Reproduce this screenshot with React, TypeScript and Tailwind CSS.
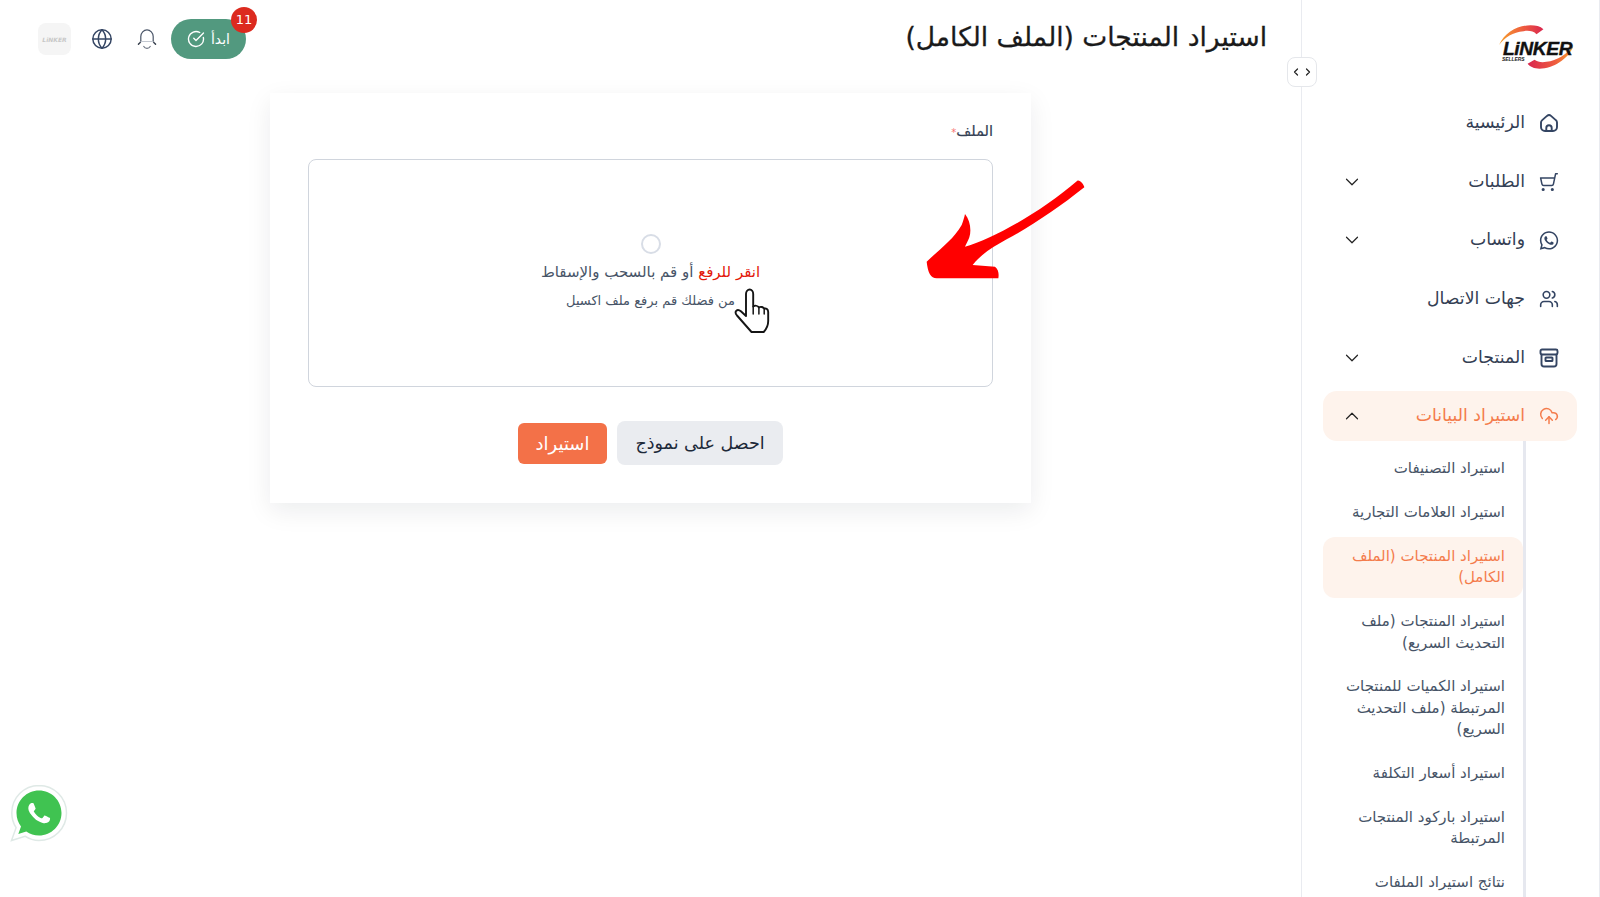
import React from "react";
import { ShoppingCart, Users, CloudUpload, ChevronDown, ChevronUp, Globe, CircleCheckBig, ChevronLeft, ChevronRight } from "lucide-react";
import { FaWhatsapp } from "react-icons/fa";

const PHONE = "M17.472 14.382c-.297-.149-1.758-.867-2.03-.967-.273-.099-.471-.148-.67.15-.197.297-.767.966-.94 1.164-.173.199-.347.223-.644.075-.297-.15-1.255-.463-2.39-1.475-.883-.788-1.48-1.761-1.653-2.059-.173-.297-.018-.458.13-.606.134-.133.298-.347.446-.52.149-.174.198-.298.298-.497.099-.198.05-.371-.025-.52-.075-.149-.669-1.612-.916-2.207-.242-.579-.487-.5-.669-.51-.173-.008-.371-.01-.57-.01-.198 0-.52.074-.792.372-.272.297-1.04 1.016-1.04 2.479 0 1.462 1.065 2.875 1.213 3.074.149.198 2.096 3.2 5.077 4.487.709.306 1.262.489 1.694.625.712.227 1.36.195 1.871.118.571-.085 1.758-.719 2.006-1.413.248-.694.248-1.289.173-1.413-.074-.124-.272-.198-.57-.347";

function HomeIcon() {
  return (
    <svg width="20" height="20" viewBox="0 0 20 20" fill="none" stroke="#344563" strokeWidth="1.9" strokeLinejoin="round" strokeLinecap="round">
      <path d="M2 9.6c0-1 .5-1.9 1.2-2.5L8 2.9c1.2-1 2.9-1 4 0l4.800 4.200c.8.6 1.200 1.500 1.200 2.500V14c0 2.200-1.800 4-4 4H6c-2.200 0-4-1.800-4-4V9.600z" />
      <path d="M7.300 18v-3c0-1.500 1.200-2.700 2.700-2.700s2.700 1.200 2.700 2.700V18" />
    </svg>
  );
}

function ArchiveIcon() {
  return (
    <svg width="20" height="20" viewBox="0 0 20 20" fill="none" stroke="#344563" strokeWidth="1.9" strokeLinejoin="round" strokeLinecap="round">
      <rect x="1.500" y="1.500" width="17" height="5" rx="1.500" />
      <path d="M2.500 6.500V16c0 1.400 1.100 2.500 2.500 2.500h10c1.400 0 2.500-1.100 2.500-2.500V6.500" />
      <rect x="6.500" y="9.500" width="7" height="3.500" rx=".6" />
    </svg>
  );
}

function BellIcon() {
  return (
    <svg width="20" height="22" viewBox="0 0 20 22" fill="none" strokeLinecap="round" strokeLinejoin="round">
      <path d="M3.800 13.500V8.500C3.800 5 6.700 1.800 10 1.800s6.200 3.200 6.200 6.700v5" stroke="#4a5568" strokeWidth="1.200" />
      <path d="M3.800 13.500c-.5 1-1.400 2-2.300 2.700M16.200 13.500c.5 1 1.400 2 2.300 2.700" stroke="#38404e" strokeWidth="1.500" />
      <path d="M3.800 13.500h12.400" stroke="#c3c8d1" strokeWidth="1" />
      <path d="M6.800 18.500c.7 1.200 1.900 1.800 3.200 1.800s2.500-.6 3.200-1.800" stroke="#6b7280" strokeWidth="1.200" />
    </svg>
  );
}

function Logo() {
  return (
    <svg width="77" height="48" viewBox="0 0 78 48" direction="ltr">
      <defs>
        <linearGradient id="arcTop" x1="0" y1="0" x2="1" y2="0">
          <stop offset="0" stopColor="#f6a12b" />
          <stop offset="0.55" stopColor="#ee5b3f" />
          <stop offset="1" stopColor="#d9264f" />
        </linearGradient>
        <linearGradient id="arcBottom" x1="0" y1="0" x2="1" y2="0">
          <stop offset="0" stopColor="#d9264f" />
          <stop offset="0.6" stopColor="#ee5b3f" />
          <stop offset="1" stopColor="#f6a12b" />
        </linearGradient>
      </defs>
      <path d="M1 21C7 8 20 1 33 1c5 0 10 1 13 4l-7 5c-3-3-8-4-13-3C15 8 7 13 1 21z" fill="url(#arcTop)" />
      <path d="M76 23C71 35 56 45 42 45c-5 0-10-2-12-5l7-4c3 2 7 3 12 2 11-1 20-8 27-15z" fill="url(#arcBottom)" />
      <text x="5" y="31" textAnchor="start" fontFamily="'Liberation Sans', sans-serif" fontWeight="700" fontStyle="italic" fontSize="19.500" letterSpacing="-0.400" fill="#111" stroke="#111" strokeWidth="0.400">LiNKER</text>
      <text x="4" y="37.500" textAnchor="start" fontFamily="'Liberation Sans', sans-serif" fontWeight="700" fontStyle="italic" fontSize="5" fill="#222">SELLERS</text>
    </svg>
  );
}

function WhatsAppBadge() {
  return (
    <svg width="58" height="58" viewBox="0 0 58 58" className="absolute left-[10px] top-[784px]">
      <path d="M29 1.500C13.800 1.500 1.800 13.800 1.800 29c0 5.400 1.600 10.500 4.300 14.700L1.500 56.500l13.500-4.300C19.100 54.900 24 56.500 29 56.500c15.200 0 27.500-12.300 27.500-27.500S44.200 1.500 29 1.500z" fill="#ffffff" stroke="#dfe9e6" strokeWidth="1.500" />
      <path d="M29 6.500C16.600 6.500 6.500 16.600 6.500 29c0 5 1.700 9.600 4.500 13.400L8.300 50l8-2.600c3.700 2.500 8 4 12.700 4 12.400 0 22.500-10.100 22.500-22.500S41.400 6.500 29 6.500z" fill="#40c351" />
      <g transform="translate(7.500 7.500) scale(1.800)"><path d={PHONE} fill="#fff" /></g>
    </svg>
  );
}

const NAV = [
  { label: "الرئيسية", icon: <HomeIcon /> },
  { label: "الطلبات", icon: <ShoppingCart size={22} strokeWidth={1.8} color="#344563" className="-scale-x-100" />, chev: true },
  { label: "واتساب", icon: <FaWhatsapp size={21} color="#344563" />, chev: true },
  { label: "جهات الاتصال", icon: <Users size={20} strokeWidth={1.9} color="#344563" /> },
  { label: "المنتجات", icon: <ArchiveIcon />, chev: true },
];

const SUB = [
  "استيراد التصنيفات",
  "استيراد العلامات التجارية",
  "استيراد المنتجات (الملف الكامل)",
  "استيراد المنتجات (ملف التحديث السريع)",
  "استيراد الكميات للمنتجات المرتبطة (ملف التحديث السريع)",
  "استيراد أسعار التكلفة",
  "استيراد باركود المنتجات المرتبطة",
  "نتائج استيراد الملفات",
];

export default function App() {
  return (
    <div dir="rtl" className="relative flex h-[897px] w-[1600px] overflow-hidden bg-white font-['DejaVu_Sans','Noto_Sans',sans-serif] text-[#344054]">
      <aside className="flex h-full w-[299px] shrink-0 flex-col overflow-hidden border-x border-[#e9ebf0] pl-[21px] pr-[22px]">
        <div className="mr-[2px] flex h-[98px] shrink-0 items-start justify-start pt-[24px]">
          <Logo />
        </div>
        <nav className="flex flex-col gap-[8.700px]">
          {NAV.map((n, i) => (
            <a key={i} className="flex h-[50px] items-center gap-[14px] pl-[18px] pr-[18px] text-[17.300px]">
              <span className="flex w-[20px] justify-center">{n.icon}</span>
              <span>{n.label}</span>
              {n.chev && <ChevronDown size={22} strokeWidth={1.300} color="#222" className="mr-auto" />}
            </a>
          ))}
          <a className="flex h-[50px] items-center gap-[14px] rounded-[14px] bg-[#fef3ec] pl-[18px] pr-[18px] text-[17.300px] text-[#f47c4c]">
            <span className="flex w-[20px] justify-center"><CloudUpload size={22} strokeWidth={1.800} color="#f47c4c" /></span>
            <span>استيراد البيانات</span>
            <ChevronUp size={22} strokeWidth={1.300} color="#222" className="mr-auto" />
          </a>
        </nav>
        <div className="mr-[51px] flex flex-col gap-[4.200px] border-r-[3px] border-[#e6e8ef] pt-[8px]">
          {SUB.map((s, i) => (
            <a key={i} className={`block rounded-[12px] py-[9px] pl-[10px] pr-[18px] text-[15px] leading-[21.500px] ${i === 2 ? "bg-[#fef3ec] text-[#f47c4c]" : "text-[#475467]"}`}>
              {s}
            </a>
          ))}
        </div>
      </aside>

      <button className="absolute left-[1287px] top-[57px] flex h-[30px] w-[30px] items-center justify-center rounded-[8px] border border-[#e5e7eb] bg-white">
        <ChevronRight size={12} strokeWidth={2.400} color="#222" />
        <ChevronLeft size={12} strokeWidth={2.400} color="#222" />
      </button>

      <main className="flex min-w-0 flex-1 flex-col">
        <header className="flex h-[93px] shrink-0 items-start justify-between pl-[38px] pr-[34px]">
          <h1 className="pt-[17px] text-[26.500px] leading-[40px] text-[#1a1a1a] [-webkit-text-stroke:0.3px_#1a1a1a]">استيراد المنتجات (الملف الكامل)</h1>
          <div className="flex items-center pt-[19px]">
            <button className="relative ml-[14px] flex h-[40px] w-[75px] items-center justify-center gap-[6px] rounded-full bg-[#52997f] text-[14px] text-white">
              <span>ابدأ</span>
              <CircleCheckBig size={18} strokeWidth={1.800} color="#fff" />
              <span className="absolute left-[60px] top-[-12px] flex h-[26px] w-[26px] items-center justify-center rounded-full bg-[#dc2a1f] text-[13px] text-white">11</span>
            </button>
            <span className="ml-[24px] flex"><BellIcon /></span>
            <span className="ml-[20px] flex"><Globe size={22} strokeWidth={1.600} color="#344563" /></span>
            <div dir="ltr" className="flex h-[32px] w-[33px] items-center justify-center rounded-[8px] bg-[#f5f5f5] text-[6px] font-bold italic text-[#c8c8c8]">LiNKER</div>
          </div>
        </header>

        <section className="mx-auto flex h-[410px] w-[761px] shrink-0 flex-col bg-white px-[38px] pt-[26px] shadow-[0_8px_24px_rgba(16,24,40,0.08)]">
          <label className="h-[40px] text-[14.500px] leading-[24px] text-[#344054] [-webkit-text-stroke:0.2px_#344054]">
            الملف<span className="text-[10px] text-[#f87171] [-webkit-text-stroke:0]">*</span>
          </label>
          <div className="flex h-[228px] flex-col items-center justify-center rounded-[8px] border border-[#d0d5dd] pb-[2px]">
            <span className="h-[20px] w-[20px] rounded-full border-2 border-[#d8dde6]" />
            <p className="mt-[8px] text-[15px] leading-[20px] text-[#475467]">
              <span className="text-[#e3170a]">انقر للرفع</span> أو قم بالسحب والإسقاط
            </p>
            <p className="mt-[9px] text-[13px] leading-[20px] text-[#475467]">من فضلك قم برفع ملف اكسيل</p>
          </div>
          <div className="mt-[34px] flex items-center justify-center gap-[10px]">
            <button className="flex h-[44px] w-[166px] items-center justify-center rounded-[8px] bg-[#eaecf0] text-[17.500px] text-[#1d2939]">احصل على نموذج</button>
            <button className="flex h-[41px] w-[89px] items-center justify-center rounded-[6px] bg-[#f37148] text-[18px] font-medium text-white">استيراد</button>
          </div>
        </section>
      </main>

      <svg width="220" height="190" viewBox="0 0 660 570" className="pointer-events-none absolute left-[900px] top-[110px]">
        <path d="M532 212C540 209 552 224 553 232C480 290 400 345 320 388C285 408 250 425 218 465L285 470C296 478 297 492 295 505L110 505C92 503 84 490 80 455C110 425 160 390 185 345C190 332 193 322 195 312C210 330 215 360 208 382C204 394 198 403 195 410C285 385 430 300 532 212Z" fill="#ff0000" />
      </svg>

      <svg width="36" height="46" viewBox="0 0 36 46" className="pointer-events-none absolute left-[734px] top-[288px]">
        <path d="M12 24V6c0-2.500 1.700-4.500 3.700-4.500S19.200 3.500 19.200 6v12.500c1.800-1.200 4.500-.9 5.700.9 1.600-1 4.200-.6 5.300 1.200 1.900-.6 4 .6 4 3.400V33c0 4.500-1.700 8-4.500 11H17.500L3 27.500c-1.500-1.800-1.800-3.500-.8-4.700 1.300-1.300 3.200-.8 4.700.5L12 28V24z" fill="#fff" stroke="#151515" strokeWidth="1.900" strokeLinejoin="round" />
        <path d="M19.200 18.500V26M24.900 19.400V26M30.200 20.600V26" fill="none" stroke="#151515" strokeWidth="1.500" strokeLinecap="round" />
      </svg>

      <WhatsAppBadge />
    </div>
  );
}
